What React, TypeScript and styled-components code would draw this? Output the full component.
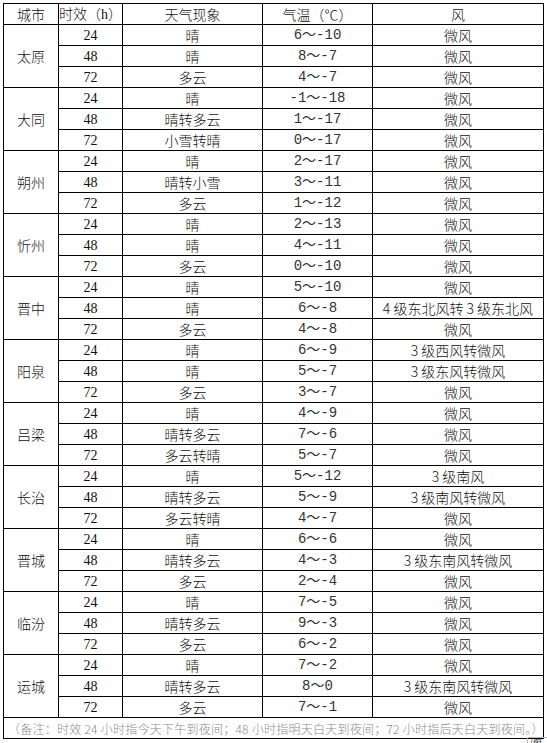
import styled, { createGlobalStyle } from 'styled-components';

type Row = [string, string, string, string];
type City = { name: string; rows: Row[] };

const cities: City[] = [
  { name: '太原', rows: [['24', '晴', '6～-10', '微风'], ['48', '晴', '8～-7', '微风'], ['72', '多云', '4～-7', '微风']] },
  { name: '大同', rows: [['24', '晴', '-1～-18', '微风'], ['48', '晴转多云', '1～-17', '微风'], ['72', '小雪转晴', '0～-17', '微风']] },
  { name: '朔州', rows: [['24', '晴', '2～-17', '微风'], ['48', '晴转小雪', '3～-11', '微风'], ['72', '多云', '1～-12', '微风']] },
  { name: '忻州', rows: [['24', '晴', '2～-13', '微风'], ['48', '晴', '4～-11', '微风'], ['72', '多云', '0～-10', '微风']] },
  { name: '晋中', rows: [['24', '晴', '5～-10', '微风'], ['48', '晴', '6～-8', '4 级东北风转 3 级东北风'], ['72', '多云', '4～-8', '微风']] },
  { name: '阳泉', rows: [['24', '晴', '6～-9', '3 级西风转微风'], ['48', '晴', '5～-7', '3 级东风转微风'], ['72', '多云', '3～-7', '微风']] },
  { name: '吕梁', rows: [['24', '晴', '4～-9', '微风'], ['48', '晴转多云', '7～-6', '微风'], ['72', '多云转晴', '5～-7', '微风']] },
  { name: '长治', rows: [['24', '晴', '5～-12', '3 级南风'], ['48', '晴转多云', '5～-9', '3 级南风转微风'], ['72', '多云转晴', '4～-7', '微风']] },
  { name: '晋城', rows: [['24', '晴', '6～-6', '微风'], ['48', '晴转多云', '4～-3', '3 级东南风转微风'], ['72', '多云', '2～-4', '微风']] },
  { name: '临汾', rows: [['24', '晴', '7～-5', '微风'], ['48', '晴转多云', '9～-3', '微风'], ['72', '多云', '6～-2', '微风']] },
  { name: '运城', rows: [['24', '晴', '7～-2', '微风'], ['48', '晴转多云', '8～0', '3 级东南风转微风'], ['72', '多云', '7～-1', '微风']] },
];

const GlobalStyle = createGlobalStyle`
  html, body {
    margin: 0;
    padding: 0;
    background: #fff;
    overflow: hidden;
  }
`;

const Page = styled.div`
  position: relative;
  width: 547px;
  height: 743px;
  padding: 3px 0 0 3px;
  box-sizing: border-box;
  font-family: "Noto Sans CJK SC", sans-serif;
  color: #111;
`;

const Table = styled.table`
  border-collapse: collapse;
  table-layout: fixed;
  width: 540px;
`;

const Tr = styled.tr`
  height: 21px;
`;

const Cell = styled.td<{ $font?: 'serif' | 'mono' }>`
  border: 1px solid #000;
  height: 19px;
  padding: 0;
  text-align: center;
  vertical-align: middle;
  font-size: 14px;
  line-height: 19px;
  white-space: nowrap;
  overflow: hidden;
  font-family: ${p =>
    p.$font === 'serif'
      ? '"Liberation Serif", serif'
      : p.$font === 'mono'
      ? '"Liberation Mono", "Noto Sans CJK SC", monospace'
      : '"Noto Sans CJK SC", sans-serif'};
  color: ${p => (p.$font === 'mono' ? '#333' : '#111')};
  font-weight: ${p => (p.$font ? 400 : 300)};
`;

const Head = styled(Cell).attrs({ as: 'th' })``;

const Serif = styled.span`
  font-family: "Liberation Serif", serif;
  line-height: 19px;
`;

const Note = styled.td`
  border: 1px solid #000;
  height: 19px;
  padding: 0 0 0 4px;
  font-size: 12px;
  line-height: 19px;
  letter-spacing: 0.25px;
  font-weight: 300;
  color: #8a8a8a;
  white-space: nowrap;
  overflow: hidden;
  font-family: "Noto Sans CJK SC", sans-serif;
`;

const Corner = styled.div`
  position: absolute;
  left: 527px;
  top: 737px;
  width: 30px;
  height: 10px;
  border-top: 1px solid #bbb;
  border-left: 1px solid #bbb;
  font-size: 9px;
  line-height: 10px;
  color: #333;
  padding-left: 2px;
  overflow: hidden;
`;

export default function App() {
  return (
    <Page>
      <GlobalStyle />
      <Table>
        <colgroup>
          <col style={{ width: 55 }} />
          <col style={{ width: 64 }} />
          <col style={{ width: 140 }} />
          <col style={{ width: 110 }} />
          <col style={{ width: 171 }} />
        </colgroup>
        <thead>
          <Tr>
            <Head>城市</Head>
            <Head>时效（<Serif>h</Serif>）</Head>
            <Head>天气现象</Head>
            <Head>气温（℃）</Head>
            <Head>风</Head>
          </Tr>
        </thead>
        <tbody>
          {cities.map(city =>
            city.rows.map((r, i) => (
              <Tr key={city.name + r[0]}>
                {i === 0 && <Cell rowSpan={3}>{city.name}</Cell>}
                <Cell $font="serif">{r[0]}</Cell>
                <Cell>{r[1]}</Cell>
                <Cell $font="mono">{r[2]}</Cell>
                <Cell>{r[3]}</Cell>
              </Tr>
            ))
          )}
          <Tr>
            <Note colSpan={5}>
              （备注：时效 24 小时指今天下午到夜间；48 小时指明天白天到夜间；72 小时指后天白天到夜间。）
            </Note>
          </Tr>
        </tbody>
      </Table>
      <Corner>(俯</Corner>
    </Page>
  );
}
